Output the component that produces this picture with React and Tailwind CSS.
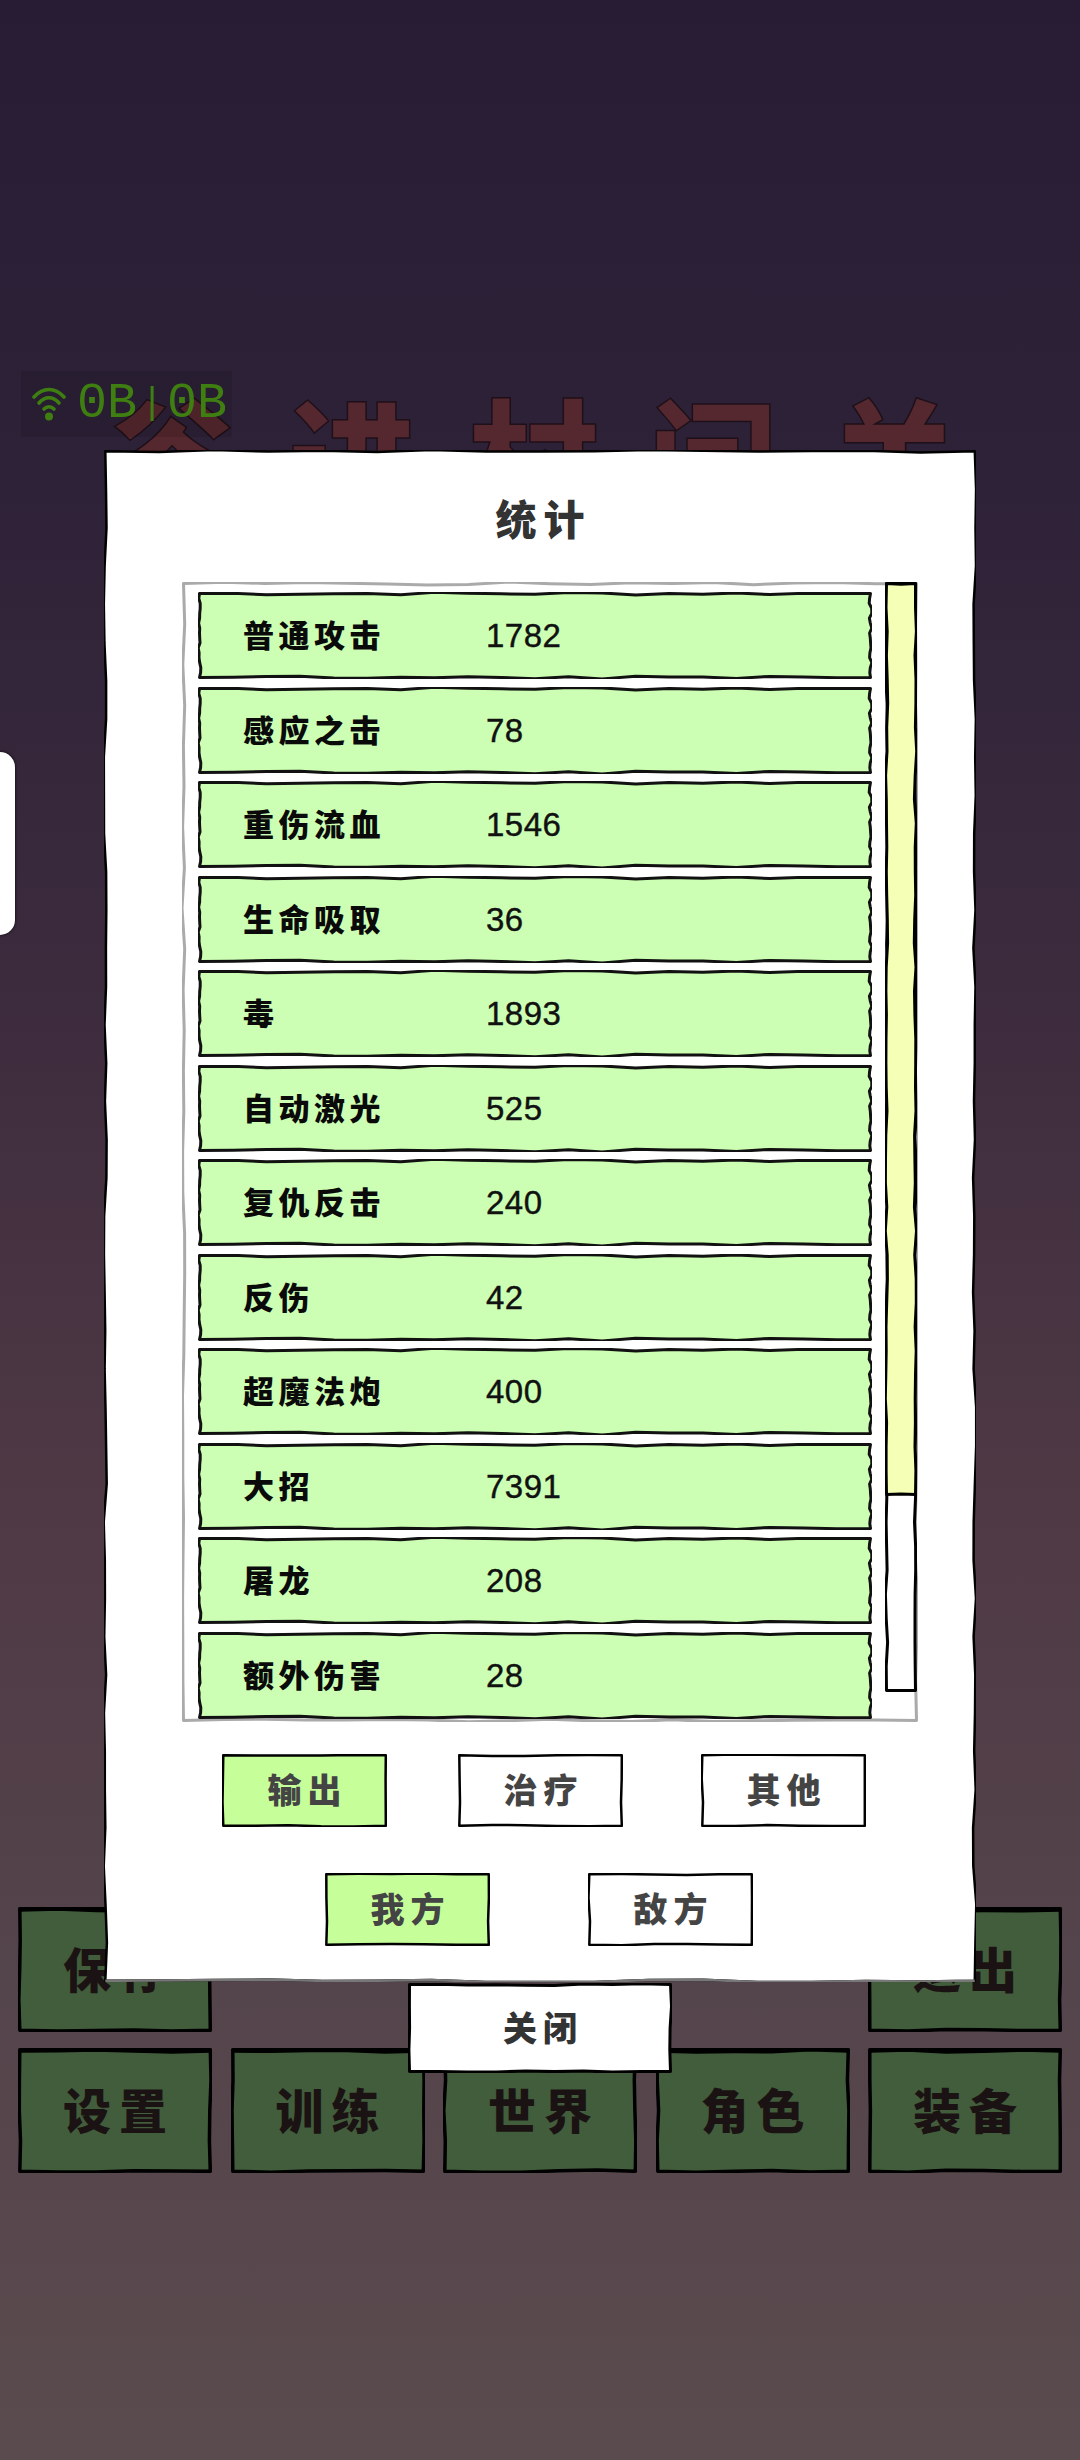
import React from 'react';

const CJK = "font-['Noto_Sans_CJK_SC','Noto_Sans',sans-serif]";

const rows = [
  ['普通攻击', '1782'],
  ['感应之击', '78'],
  ['重伤流血', '1546'],
  ['生命吸取', '36'],
  ['毒', '1893'],
  ['自动激光', '525'],
  ['复仇反击', '240'],
  ['反伤', '42'],
  ['超魔法炮', '400'],
  ['大招', '7391'],
  ['屠龙', '208'],
  ['额外伤害', '28'],
];

function makeRand(seed) {
  let s = seed * 9301 + 49297;
  return () => {
    s = (s * 9301 + 49297) % 233280;
    return s / 233280;
  };
}

// one wobbly edge, leaves out the start point
function edge(x0, y0, x1, y1, step, amp, rand) {
  const len = Math.hypot(x1 - x0, y1 - y0);
  const n = Math.max(1, Math.round(len / step));
  const nx = (y1 - y0) / len;
  const ny = (x0 - x1) / len;
  let d = '';
  for (let i = 1; i <= n; i++) {
    const t = i / n;
    const off = i === n ? 0 : (rand() - 0.5) * 2 * amp;
    d += ` L${(x0 + (x1 - x0) * t + nx * off).toFixed(1)} ${(y0 + (y1 - y0) * t + ny * off).toFixed(1)}`;
  }
  return d;
}

function Sketch({ w, h, fill = '#fff', stroke = '#000', sw = 3, seed = 1, amp = 1.2, step = 30, sideAmp = 1.2, sideStep = 30, topBar = 0, bottomColor, className = '', inner = '', children }) {
  const rand = makeRand(seed);
  const p = sw / 2;
  const top = edge(p, p, w - p, p, step, amp, rand);
  const right = edge(w - p, p, w - p, h - p, sideStep, sideAmp, rand);
  const bottom = edge(w - p, h - p, p, h - p, step, amp, rand);
  const left = edge(p, h - p, p, p, sideStep, sideAmp, rand);
  return (
    <div className={`relative shrink-0 ${className}`}>
      <svg className="absolute inset-0 block" width={w} height={h} viewBox={`0 0 ${w} ${h}`}>
        <path d={`M${p} ${p}${top}${right}${bottom}${left} Z`} fill={fill} stroke={stroke} strokeWidth={sw} strokeLinejoin="round" />
        {topBar > 0 && <path d={`M${p} ${p}${top}`} fill="none" stroke={stroke} strokeWidth={topBar} />}
        {bottomColor && <path d={`M${w - p} ${h - p}${bottom}`} fill="none" stroke={bottomColor} strokeWidth={sw} />}
      </svg>
      <div className={`relative w-full h-full ${inner}`}>{children}</div>
    </div>
  );
}

function BgButton({ label, seed, className = '' }) {
  return (
    <Sketch w={194} h={125} fill="#425d3c" sw={3.5} seed={seed} amp={1.2} step={36} sideAmp={1} sideStep={28} topBar={6} className={`w-[194px] h-[125px] ${className}`} inner="flex items-center justify-center pb-[5px]">
      <span className="text-[48px] leading-none font-black tracking-[8px] pl-[8px] text-[#1b1313]">{label}</span>
    </Sketch>
  );
}

function TabButton({ label, active, seed, className = '' }) {
  return (
    <Sketch w={165} h={73} fill={active ? '#c6ff99' : '#fff'} sw={2.5} seed={seed} amp={0.8} step={30} sideAmp={0.8} sideStep={22} className={`w-[165px] h-[73px] ${className}`} inner="flex items-center justify-center pb-[3px]">
      <span className="text-[34px] leading-none font-black tracking-[6px] pl-[6px] text-[#444]">{label}</span>
    </Sketch>
  );
}

function StatRow({ label, value }) {
  return (
    <Sketch w={674} h={87} fill="#ccffb3" stroke="#111" sw={3} seed={7} amp={1.6} step={34} sideAmp={1.4} sideStep={5} className="w-[674px] h-[87px]" inner="flex items-center pl-[45px]">
      <span className="w-[243px] -mt-[4px] text-[31px] leading-none font-black tracking-[4.5px] text-[#0a0a0a]">{label}</span>
      <span className="text-[33px] leading-none tracking-[0.5px] text-[#111] font-['Liberation_Sans',sans-serif] [-webkit-text-stroke:0.4px_#111]">{value}</span>
    </Sketch>
  );
}

export default function App() {
  return (
    <div className={`relative w-[1080px] h-[2460px] overflow-hidden flex flex-col ${CJK} bg-[linear-gradient(180deg,#271c34_0%,#2e2238_20%,#3c2b3d_40%,#4e3844_60%,#54444b_80%,#5a4b4e_100%)]`}>
      {/* game screen behind the dialog */}
      <div className="pt-[387px] flex justify-center">
        <span className="text-[130px] leading-none font-black tracking-[50px] pl-[36px] whitespace-nowrap text-[#55272f] [-webkit-text-stroke:1.5px_#1e1018]">谷进村问关</span>
      </div>
      <div className="mt-auto mb-[287px] px-[18px] grid grid-cols-[repeat(5,194px)] gap-x-[18.5px] gap-y-[16px]">
        <BgButton label="保存" seed={11} />
        <BgButton label="退出" seed={12} className="col-start-5" />
        <BgButton label="设置" seed={13} />
        <BgButton label="训练" seed={14} />
        <BgButton label="世界" seed={15} />
        <BgButton label="角色" seed={16} />
        <BgButton label="装备" seed={17} />
      </div>

      {/* network badge */}
      <div className="absolute left-[21px] top-[371px] w-[211px] h-[66px] bg-[#00000018] flex items-center pl-[11px]">
        <svg width="34" height="34" viewBox="0 0 34 34" fill="none" stroke="#3f7f12" strokeWidth="3.6" strokeLinecap="round">
          <path d="M2 10 C11 0 23 0 32 10" />
          <path d="M7 16 C13 9 21 9 27 16" />
          <path d="M12 22 C15 19 19 19 22 22" />
          <circle cx="17" cy="29.5" r="4" fill="#3f7f12" stroke="none" />
        </svg>
        <span className="ml-[11px] flex items-baseline text-[50px] leading-none text-[#3f7f12] font-['Liberation_Mono',monospace]">
          0B
          <span className="inline-block w-[30px] text-center text-[36px] leading-none -translate-y-[4px]">|</span>
          0B
        </span>
      </div>

      {/* left edge handle */}
      <div className="absolute left-0 top-[752px] w-[15px] h-[183px] bg-white rounded-r-[16px] shadow-[0_0_3px_#000]" />

      {/* dialog */}
      <div className="absolute inset-0 flex flex-col items-center pt-[450px]">
        <Sketch w={872} h={1532} sw={2.5} seed={3} amp={1.3} step={55} sideAmp={1.7} sideStep={38} bottomColor="#777" className="w-[872px] h-[1532px]" inner="flex flex-col">
          <div className="h-[132px] flex items-center justify-center pt-[2px]">
            <span className="text-[41px] leading-none font-black tracking-[7px] pl-[7px] text-[#333]">统计</span>
          </div>
          <Sketch w={736} h={1140} stroke="#aaa" sw={3} seed={5} amp={1.5} step={40} sideAmp={1.5} sideStep={40} className="ml-[78px] w-[736px] h-[1140px]" inner="flex overflow-hidden">
            <div className="ml-[16px] pt-[10px] w-[674px] flex flex-col gap-y-[7.5px]">
              {rows.map(([label, value]) => (
                <StatRow key={label} label={label} value={value} />
              ))}
            </div>
            <Sketch w={32} h={1110} sw={3} seed={9} amp={0.8} step={30} sideAmp={1.2} sideStep={24} className="ml-[13px] w-[32px] h-[1110px]">
              <Sketch w={32} h={914} fill="#f6ffb6" sw={3} seed={10} amp={0.8} step={12} sideAmp={1.2} sideStep={24} className="w-[32px] h-[914px]" />
            </Sketch>
          </Sketch>
          <div className="mt-[32px] flex pl-[118px]">
            <TabButton label="输出" active seed={21} />
            <TabButton label="治疗" seed={22} className="ml-[71px]" />
            <TabButton label="其他" seed={23} className="ml-[78px]" />
          </div>
          <div className="mt-[46px] flex pl-[221px]">
            <TabButton label="我方" active seed={24} />
            <TabButton label="敌方" seed={25} className="ml-[98px]" />
          </div>
        </Sketch>
        <Sketch w={264} h={90} sw={3} seed={31} amp={1} step={30} sideAmp={1} sideStep={24} className="mt-[1px] w-[264px] h-[90px]" inner="flex items-center justify-center pb-[3px]">
          <span className="text-[34px] leading-none font-black tracking-[6px] pl-[6px] text-[#333]">关闭</span>
        </Sketch>
      </div>
    </div>
  );
}
